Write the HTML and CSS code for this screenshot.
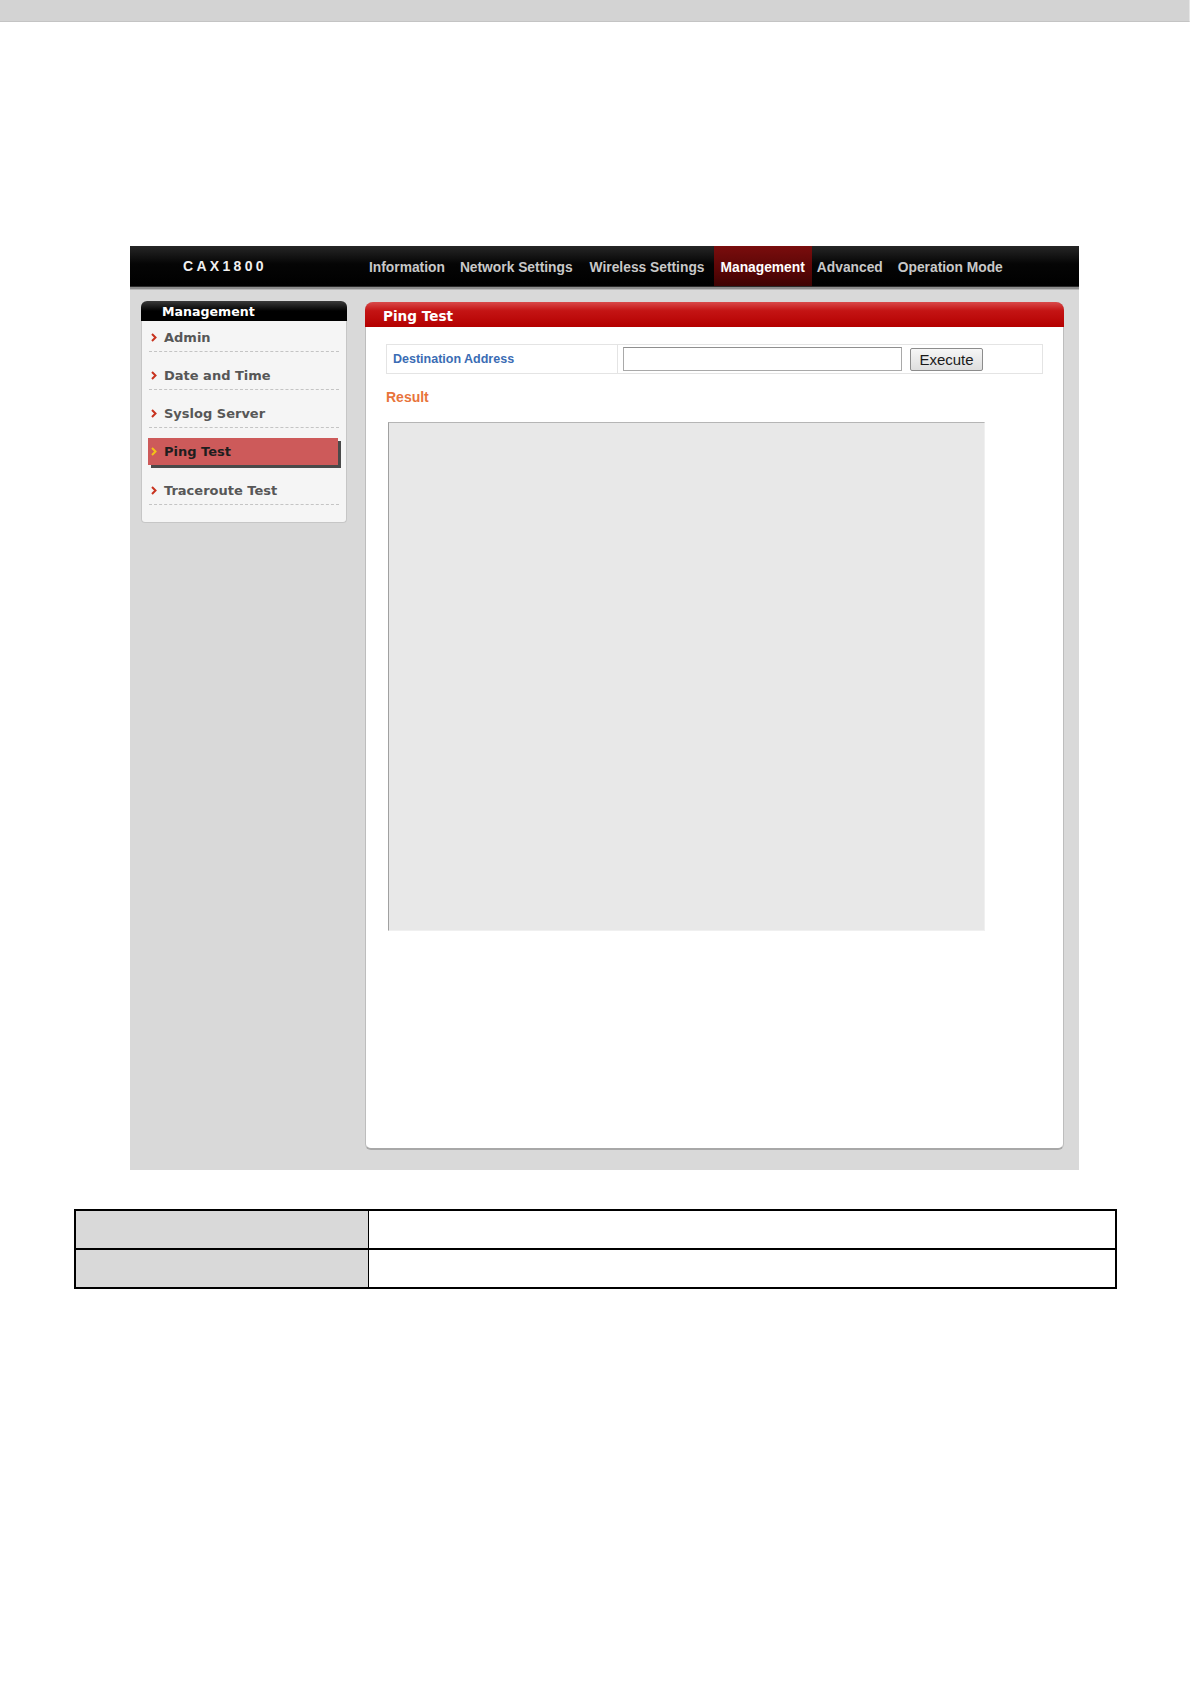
FILE: index.html
```html
<!DOCTYPE html>
<html>
<head>
<meta charset="utf-8">
<title>CAX1800 - Ping Test</title>
<link rel="stylesheet" href="styles.css">
</head>
<body>
<div class="topbar"></div>

<div class="frame">
  <div class="header">
    <div class="logo">CAX1800</div>
    <ul class="nav">
      <li class="nav-item">Information</li>
      <li class="nav-item">Network Settings</li>
      <li class="nav-item wide">Wireless Settings</li>
      <li class="nav-item active">Management</li>
      <li class="nav-item after-active">Advanced</li>
      <li class="nav-item">Operation Mode</li>
    </ul>
  </div>
  <div class="hline"></div>

  <div class="body">
    <div class="sidebar">
      <div class="side-head">Management</div>
      <ul class="side-list">
        <li class="side-item"><svg class="chev" width="6" height="9" viewBox="0 0 6 9"><path d="M1 1 L4.5 4.5 L1 8" fill="none" stroke="#c8321e" stroke-width="2"/></svg>Admin</li>
        <li class="side-item"><svg class="chev" width="6" height="9" viewBox="0 0 6 9"><path d="M1 1 L4.5 4.5 L1 8" fill="none" stroke="#c8321e" stroke-width="2"/></svg>Date and Time</li>
        <li class="side-item"><svg class="chev" width="6" height="9" viewBox="0 0 6 9"><path d="M1 1 L4.5 4.5 L1 8" fill="none" stroke="#c8321e" stroke-width="2"/></svg>Syslog Server</li>
        <li class="side-item current"><svg class="chev" width="6" height="9" viewBox="0 0 6 9"><path d="M1 1 L4.5 4.5 L1 8" fill="none" stroke="#f2c318" stroke-width="2"/></svg>Ping Test</li>
        <li class="side-item"><svg class="chev" width="6" height="9" viewBox="0 0 6 9"><path d="M1 1 L4.5 4.5 L1 8" fill="none" stroke="#c8321e" stroke-width="2"/></svg>Traceroute Test</li>
      </ul>
    </div>

    <div class="content">
      <div class="content-head">Ping Test</div>
      <div class="form-row">
        <div class="form-label">Destination Address</div>
        <div class="form-field">
          <input class="text-input" type="text">
          <button class="btn" type="button">Execute</button>
        </div>
      </div>
      <div class="result-title">Result</div>
      <div class="result-box"></div>
    </div>
  </div>
</div>

<table class="desc">
  <tr><td class="desc-key"></td><td class="desc-val"></td></tr>
  <tr><td class="desc-key"></td><td class="desc-val"></td></tr>
</table>
</body>
</html>
```

FILE: styles.css
```css
html, body {
  margin: 0;
  padding: 0;
  background: #ffffff;
}

.topbar {
  height: 21px;
  width: 1189px;
  background: #d3d3d3;
  border-bottom: 1px solid #c4c4c4;
  border-right: 1px solid #e6e6e6;
}

.frame {
  margin: 224px 0 0 130px;
  width: 949px;
}

.header {
  height: 40px;
  background: linear-gradient(#262626, #050505 45%, #000000);
  display: flex;
  align-items: stretch;
}

.logo {
  width: 179px;
  padding-left: 53px;
  padding-top: 2px;
  color: #f0f0f0;
  font-family: "Liberation Sans", Arial, sans-serif;
  font-weight: bold;
  font-size: 14px;
  letter-spacing: 3.3px;
  line-height: 36px;
}

.nav {
  list-style: none;
  margin: 0;
  padding: 0;
  display: flex;
}

.nav-item {
  padding: 2px 7px 0 7px;
  color: #c8c8c8;
  font-family: "Liberation Sans", Arial, sans-serif;
  font-weight: bold;
  font-size: 13.8px;
  line-height: 40px;
  margin-right: 1px;
}

.nav-item.wide {
  margin-left: 2px;
}

.nav-item.active {
  margin-left: 2px;
  padding: 2px 7px 0 6px;
  color: #ffffff;
  background: linear-gradient(#7a0d0d, #5a0606 60%, #3e0303);
  margin-right: 0;
}

.nav-item.after-active {
  padding-left: 5px;
}

.hline {
  height: 4px;
  background: linear-gradient(#2a2a2a 0, #2a2a2a 1px, #8d8d8d 1px, #8d8d8d 3px, #b8b8b8 3px);
}

.body {
  background: #d9d9d9;
  padding: 11px 15px 20px 11px;
  display: flex;
  align-items: flex-start;
  gap: 18px;
}

/* Sidebar */
.sidebar {
  width: 204px;
  background: #f5f5f5;
  border: 1px solid #c6c6c6;
  border-top: none;
  border-radius: 6px 6px 4px 4px;
  padding-bottom: 17px;
}

.side-head {
  height: 20px;
  margin: 0 -1px;
  background: linear-gradient(#3a3a3a, #000000 50%);
  border-radius: 6px 6px 0 0;
  color: #ffffff;
  font-family: "DejaVu Sans", Verdana, sans-serif;
  font-weight: bold;
  font-size: 12.6px;
  line-height: 21px;
  padding-left: 21px;
}

.side-list {
  list-style: none;
  margin: 0;
  padding: 0 7px;
}

.side-item {
  display: flex;
  align-items: center;
  padding: 8px 0 4px 2px;
  margin-top: 7px;
  line-height: 18px;
  border-bottom: 1px dashed #c4c4c4;
  color: #575757;
  font-family: "DejaVu Sans", Verdana, sans-serif;
  font-weight: bold;
  font-size: 13px;
}

.side-item:first-child {
  margin-top: 0;
}

.chev {
  margin-right: 7px;
  margin-top: -2px;
  flex: none;
}

.side-item.current {
  margin: 10px 1px 0 -1px;
  padding: 5px 0 4px 3px;
  background: #cd5a5a;
  color: #1e1e1e;
  border-bottom: none;
  box-shadow: 3px 3px 0 #4a4a4a;
}

.side-item.current + .side-item {
  margin-top: 9px;
}

/* Content */
.content {
  flex: 1;
  height: 845px;
  margin-top: 1px;
  background: #ffffff;
  border: 1px solid #bdbdbd;
  border-bottom: 2px solid #a8a8a8;
  border-radius: 8px 8px 6px 6px;
}

.content-head {
  height: 25px;
  margin: -1px -1px 0 -1px;
  background: linear-gradient(#d94a4a 0, #c41414 35%, #b40000 100%);
  border-radius: 8px 8px 0 0;
  color: #ffffff;
  font-family: "DejaVu Sans", Verdana, sans-serif;
  font-weight: bold;
  font-size: 13.6px;
  line-height: 29px;
  padding-left: 18px;
}

.form-row {
  margin: 17px 0 0 20px;
  width: 655px;
  height: 28px;
  border: 1px solid #e4e4e4;
  display: flex;
}

.form-label {
  width: 224px;
  padding-left: 6px;
  border-right: 1px solid #e4e4e4;
  color: #3a6cb4;
  font-family: "Liberation Sans", Arial, sans-serif;
  font-weight: bold;
  font-size: 12.5px;
  line-height: 28px;
}

.form-field {
  display: flex;
  align-items: center;
  padding-left: 5px;
  gap: 8px;
}

.text-input {
  box-sizing: border-box;
  width: 279px;
  height: 24px;
  margin: 0;
  border: 1px solid #a9a9a9;
  border-top-color: #8f8f8f;
  background: #ffffff;
}

.btn {
  box-sizing: border-box;
  width: 73px;
  height: 23px;
  margin: 0;
  padding: 0;
  border: 1px solid #8c8c8c;
  border-radius: 2px;
  background: linear-gradient(#f6f6f6, #dedede);
  color: #1a1a1a;
  font-family: "Liberation Sans", Arial, sans-serif;
  font-size: 15px;
  line-height: 21px;
}

.result-title {
  margin: 15px 0 0 20px;
  color: #e8743c;
  font-family: "Liberation Sans", Arial, sans-serif;
  font-weight: bold;
  font-size: 14px;
  line-height: 16px;
}

.result-box {
  margin: 17px 0 0 22px;
  box-sizing: border-box;
  width: 597px;
  height: 509px;
  background: #e8e8e8;
  border-top: 1px solid #b5b5b5;
  border-left: 1px solid #a0a0a0;
  border-right: 1px solid #f0f0f0;
  border-bottom: 1px solid #f0f0f0;
}

/* Description table */
.desc {
  margin: 39px 0 0 74px;
  width: 1043px;
  border-collapse: collapse;
  border: 2px solid #000000;
}

.desc td {
  height: 37px;
  padding: 0;
  border-top: 2px solid #000000;
}

.desc-key {
  width: 292px;
  background: #d9d9d9;
  border-right: 1px solid #000000;
}

.desc-val {
  background: #ffffff;
}
```
